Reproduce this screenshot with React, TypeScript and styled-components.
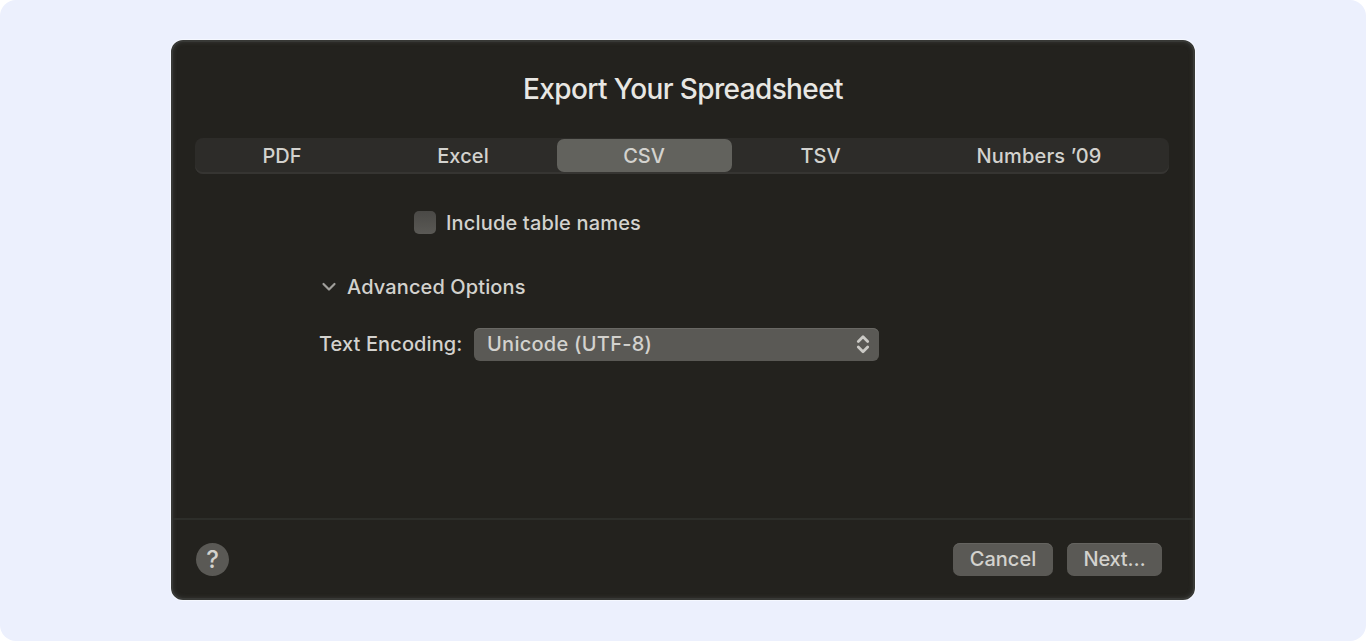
import React, { FC } from 'react';
import styled, { createGlobalStyle } from 'styled-components';

const colors = {
  page: '#ecf0fd',
  window: '#23221e',
  track: '#2d2c29',
  selected: '#62625d',
  control: '#5a5955',
  text: '#d3d2ce',
};

const GlobalStyle = createGlobalStyle`
  * {
    box-sizing: border-box;
  }

  body {
    margin: 0;
    background-color: white;
  }
`;

const Page = styled.div`
  display: flex;
  width: 100%;
  height: 641px;
  padding: 40px 171px 41px;
  border-radius: 16px;
  background-color: ${colors.page};
  color: ${colors.text};
  font-family: Inter, 'Liberation Sans', sans-serif;
  font-size: 20px;
  font-weight: 500;
  line-height: 24px;
`;

const Window = styled.main`
  display: flex;
  flex-direction: column;
  width: 1024px;
  height: 560px;
  border: 2px solid #383936;
  border-radius: 12px;
  background-color: ${colors.window};
  box-shadow: 0 0 0 1px #f5f8ff, inset 0 0 4px #383936;
`;

const Text = styled.span<{ spacing?: number }>`
  letter-spacing: ${({ spacing = 0 }) => spacing}px;
  white-space: nowrap;
`;

const Title = styled.h1`
  margin: 30px 0 0;
  color: #e8e7e3;
  font-size: 28px;
  font-weight: 500;
  line-height: 34px;
  text-align: center;
`;

const Tabs = styled.div`
  display: grid;
  grid-template-columns: 175px 187px 175px 178px 259px;
  height: 36px;
  margin: 32px 24px 0 22px;
  border-radius: 8px;
  background-color: ${colors.track};
  box-shadow: inset 0 -2px 0 #363532;
`;

const Tab = styled.button<{ selected?: boolean }>`
  height: 33px;
  margin-top: 1px;
  padding: 0 1px 0 0;
  border: 0;
  border-radius: 7px;
  background-color: ${({ selected }) => (selected ? colors.selected : 'transparent')};
  color: inherit;
  font: inherit;
`;

const Options = styled.section`
  flex: 1;
  padding: 37px 0 0 147px;
`;

const CheckboxRow = styled.label`
  display: flex;
  align-items: center;
  gap: 10px;
  height: 24px;
  margin-left: 94px;
`;

const Checkbox = styled.span`
  width: 22px;
  height: 23px;
  margin-bottom: 2px;
  border-radius: 5px;
  background: linear-gradient(#4a4946, #5a5955);
`;

const Disclosure = styled.div`
  display: flex;
  align-items: center;
  gap: 9px;
  height: 24px;
  margin-top: 40px;
`;

const EncodingRow = styled.div`
  display: flex;
  align-items: center;
  gap: 13px;
  height: 33px;
  margin-top: 29px;
`;

const EncodingLabel = styled.label`
  width: 142px;
  margin-left: -1px;
  padding-bottom: 2px;
  white-space: nowrap;
`;

const Select = styled.div`
  display: flex;
  align-items: center;
  justify-content: space-between;
  width: 405px;
  height: 33px;
  padding: 0 9px 2px 13px;
  border-radius: 6px;
  background-color: ${colors.control};
  box-shadow: inset 0 1px 0 #696864;
`;

const Footer = styled.footer`
  display: flex;
  align-items: center;
  gap: 14px;
  height: 80px;
  padding: 1px 31px 0 23px;
  border-top: 2px solid #2d2e2a;
`;

const HelpButton = styled.button`
  width: 33px;
  height: 33px;
  margin-right: auto;
  padding: 0;
  border: 0;
  border-radius: 50%;
  background-color: ${colors.control};
  color: ${colors.text};
  font: 500 24px/33px Inter, sans-serif;
`;

const Button = styled.button<{ width: number }>`
  width: ${({ width }) => width}px;
  height: 33px;
  padding: 0 0 2px;
  border: 0;
  border-radius: 7px;
  background-color: ${colors.control};
  box-shadow: inset 0 1px 0 #656460;
  color: ${colors.text};
  font: inherit;
`;

const ChevronDown: FC = () => (
  <svg width="18" height="12" viewBox="0 0 18 12" fill="none">
    <path d="M3.5 3L9 8.5L14.5 3" stroke="#a09f9b" strokeWidth="2.2" strokeLinecap="round" strokeLinejoin="round" />
  </svg>
);

const UpDownArrows: FC = () => (
  <svg width="14" height="20" viewBox="0 0 14 20" fill="none">
    <path
      d="M2.3 7.5L7 2.8L11.7 7.5M2.3 13L7 17.7L11.7 13"
      stroke="#cbcac6"
      strokeWidth="2.8"
      strokeLinecap="round"
      strokeLinejoin="round"
    />
  </svg>
);

const formats = [
  { name: 'PDF', spacing: 0 },
  { name: 'Excel', spacing: 0.1 },
  { name: 'CSV', spacing: -0.1 },
  { name: 'TSV', spacing: 0 },
  { name: 'Numbers ’09', spacing: 0.2 },
];

const App: FC = () => {
  return (
    <>
      <GlobalStyle />
      <Page>
        <Window>
          <Title>
            <Text spacing={-0.62}>Export Your Spreadsheet</Text>
          </Title>
          <Tabs>
            {formats.map(({ name, spacing }) => (
              <Tab key={name} selected={name === 'CSV'}>
                <Text spacing={spacing}>{name}</Text>
              </Tab>
            ))}
          </Tabs>
          <Options>
            <CheckboxRow>
              <Checkbox />
              <Text spacing={0.16}>Include table names</Text>
            </CheckboxRow>
            <Disclosure>
              <ChevronDown />
              <Text spacing={0.12}>Advanced Options</Text>
            </Disclosure>
            <EncodingRow>
              <EncodingLabel>
                <Text spacing={0.1}>Text Encoding:</Text>
              </EncodingLabel>
              <Select>
                <Text spacing={0.27}>Unicode (UTF-8)</Text>
                <UpDownArrows />
              </Select>
            </EncodingRow>
          </Options>
          <Footer>
            <HelpButton>?</HelpButton>
            <Button width={100}>
              <Text>Cancel</Text>
            </Button>
            <Button width={95}>
              <Text spacing={-0.2}>Next…</Text>
            </Button>
          </Footer>
        </Window>
      </Page>
    </>
  );
};

export default App;
